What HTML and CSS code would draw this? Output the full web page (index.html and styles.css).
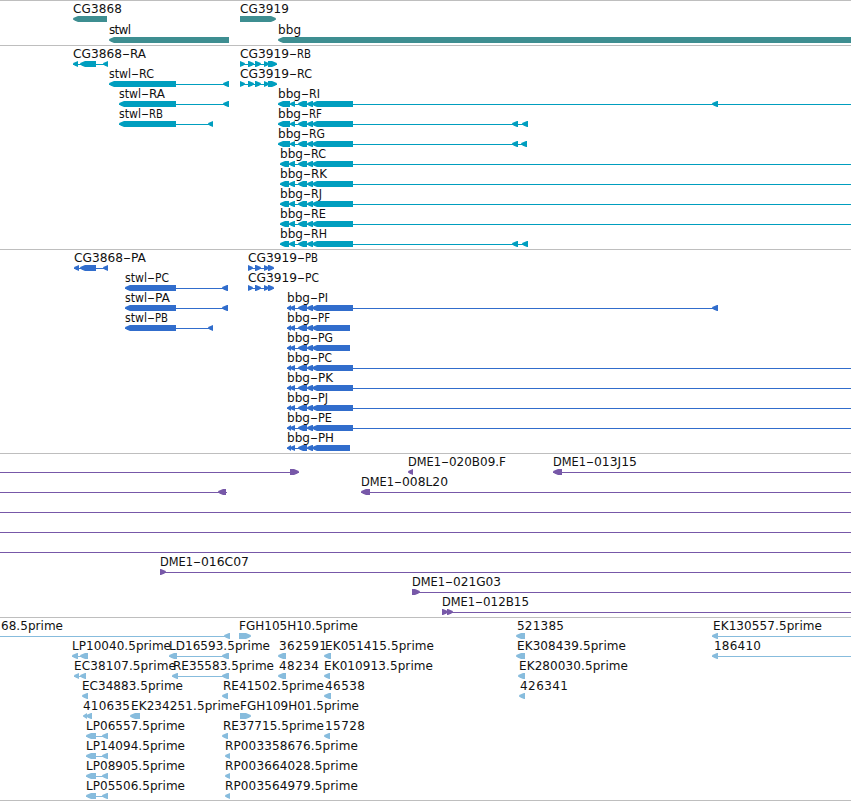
FILE: index.html
```
<!DOCTYPE html>
<html lang="en">
<head>
  <meta charset="UTF-8" />
  <title>Genome Browser</title>
  <link rel="stylesheet" href="styles.css">
</head>
<body>
  <div class="browser" id="browser"></div>
  <script src="tracks.js"></script>
</body>
</html>
```

FILE: styles.css
```
body {
  margin: 0;
  background: #fff;
}

.browser {
  width: 851px;
  height: 800px;
  overflow: hidden;
  border-bottom: 1px solid #bebebe;
}

.track {
  border-top: 1px solid #bebebe;
  overflow: hidden;
}

.track svg {
  display: block;
}

.label {
  font-family: "DejaVu Sans", sans-serif;
  font-size: 12px;
  fill: #111;
}

.genes {
  height: 44px;
  fill: #3e8e91;
}

.transcripts {
  height: 203px;
  fill: #009ebf;
}

.proteins {
  height: 203px;
  fill: #316dcc;
}

.bacs {
  height: 163px;
  fill: #7758a8;
}

.ests {
  height: 182px;
  fill: #87bcdd;
}
```

FILE: tracks.js
```
// feature: [label, x, label width, glyphs]
// glyphs: "<" left arrow, ">" right arrow, "-" line, each as start,end
const bbgR = "-278,353 <278,290 <290,295 <298,307 <307,313 <312,353";
const bbgR2 = "-280,353 <280,289 <289,295 <298,307 <307,313 <312,353";
const bbgP = "-287,350 <287,291 <290,295 <298,307 <307,313 <312,350";
const bbgP2 = "-287,353 <287,291 <290,295 <298,307 <307,313 <312,353";
const cgR = "-240,277 >240,245 >248,254 >255,261 >264,269 >268,277";
const cgP = "-248,274 >248,253 >255,261 >264,269 >268,274";
const lp = "-86,108 <86,96 <102,108";

const tracks = [
  { name: "genes", step: 21, rows: [
    [["CG3868", 73, 49, "<73,107"], ["CG3919", 240, 49, ">240,276"]],
    [["stwl", 109, 22, "<109,229"], ["bbg", 278, 23, "<278,860"]]
  ]},
  { name: "transcripts", step: 20, rows: [
    [["CG3868-RA", 73, 73, "-73,108 <73,78 <80,96 <103,108"], ["CG3919-RB", 240, 71, cgR]],
    [["stwl-RC", 109, 45, "-109,229 <109,176 <223,229"], ["CG3919-RC", 240, 72, cgR]],
    [["stwl-RA", 119, 46, "-119,229 <119,176 <223,229"], ["bbg-RI", 278, 42, bbgR + " -353,851 <712,718"]],
    [["stwl-RB", 119, 44, "-119,213 <119,176 <208,213"], ["bbg-RF", 278, 44, bbgR + " -353,528 <512,518 <522,528"]],
    [["bbg-RG", 278, 47, bbgR + " -353,527 <512,518 <521,527"]],
    [["bbg-RC", 280, 46, bbgR2 + " -353,851"]],
    [["bbg-RK", 280, 47, bbgR2 + " -353,851"]],
    [["bbg-RJ", 280, 42, bbgR2 + " -353,851"]],
    [["bbg-RE", 280, 46, bbgR2 + " -353,851"]],
    [["bbg-RH", 280, 47, bbgR2 + " -353,528 <512,518 <522,528"]]
  ]},
  { name: "proteins", step: 20, rows: [
    [["CG3868-PA", 74, 72, "-74,108 <74,79 <80,96 <103,108"], ["CG3919-PB", 248, 70, cgP]],
    [["stwl-PC", 125, 44, "-125,228 <125,176 <222,228"], ["CG3919-PC", 248, 71, cgP]],
    [["stwl-PA", 125, 45, "-125,228 <125,176 <222,228"], ["bbg-PI", 287, 41, bbgP2 + " -353,718 <712,718"]],
    [["stwl-PB", 125, 43, "-125,213 <125,176 <208,213"], ["bbg-PF", 287, 43, bbgP]],
    [["bbg-PG", 287, 46, bbgP]],
    [["bbg-PC", 287, 45, bbgP2 + " -353,851"]],
    [["bbg-PK", 287, 46, bbgP2 + " -353,851"]],
    [["bbg-PJ", 287, 41, bbgP2 + " -353,851"]],
    [["bbg-PE", 287, 45, bbgP2 + " -353,851"]],
    [["bbg-PH", 287, 47, bbgP]]
  ]},
  { name: "bacs", step: 20, rows: [
    [["", 0, 0, "-0,299 >290,299"], ["DME1-020B09.F", 408, 98, "<408,413"], ["DME1-013J15", 553, 84, "-553,851 <553,562"]],
    [["", 0, 0, "-0,227 <218,226"], ["DME1-008L20", 361, 87, "-361,851 <361,370"]],
    [["", 0, 0, "-0,851"]],
    [["", 0, 0, "-0,851"]],
    [["", 0, 0, "-0,851"]],
    [["DME1-016C07", 160, 89, "-160,851 >160,166"]],
    [["DME1-021G03", 412, 89, "-412,851 >412,420"]],
    [["DME1-012B15", 442, 87, "-442,851 >442,448 >447,453"]]
  ]},
  { name: "ests", step: 20, rows: [
    [["68.5prime", 1, 62, "-0,230 <224,230"], ["FGH105H10.5prime", 239, 119, ">239,251"],
     ["521385", 517, 47, "<516,525"], ["EK130557.5prime", 713, 109, "-712,851 <712,718"]],
    [["LP10040.5prime", 72, 99, "-72,88 <72,78 <80,88"], ["LD16593.5prime", 169, 101, "-169,229 <169,177 <222,229"],
     ["362591", 279, 48, "<278,286"], ["EK051415.5prime", 325, 109, "<324,331"],
     ["EK308439.5prime", 517, 109, "<516,525"], ["186410", 714, 47, "-712,851 <712,718"]],
    [["EC38107.5prime", 74, 102, "-74,86 <74,79 <80,86"], ["RE35583.5prime", 173, 101, "-172,229 <172,178 <222,229"],
     ["48234", 279, 40, "<278,286"], ["EK010913.5prime", 324, 109, "<324,330"],
     ["EK280030.5prime", 519, 109, "<518,525"]],
    [["EC34883.5prime", 82, 101, "<82,88"], ["RE41502.5prime", 223, 101, "<222,228"],
     ["46538", 325, 40, "<324,331"], ["426341", 520, 48, "<519,525"]],
    [["410635", 83, 47, "<83,87 <86,92"], ["EK234251.5prime", 131, 109, "<130,140"],
     ["FGH109H01.5prime", 240, 119, ">240,251"]],
    [["LP06557.5prime", 86, 99, lp], ["RE37715.5prime", 223, 101, "<222,228"], ["15728", 325, 40, "<324,330"]],
    [["LP14094.5prime", 86, 99, lp], ["RP003358676.5prime", 225, 133, "<225,230"]],
    [["LP08905.5prime", 86, 99, lp], ["RP003664028.5prime", 225, 133, "<225,230"]],
    [["LP05506.5prime", 86, 99, lp], ["RP003564979.5prime", 225, 133, "<225,230"]]
  ]}
];

// width of the part of a label before its dash
const prefixWidth = { CG3868: 49, CG3919: 49, stwl: 22, bbg: 23, DME1: 33 };
const dashWidth = 8;

function drawGlyph(glyph, y) {
  const type = glyph[0];
  const [a, b] = glyph.slice(1).split(",").map(Number);
  if (type === "-") {
    return `<rect x="${a}" y="${y + 3}" width="${b - a}" height="1"/>`;
  }
  const head = Math.min(5, b - a);
  // tip and base swap sides with the direction
  const d = type === "<" ? 1 : -1;
  const tip = type === "<" ? a : b;
  const base = type === "<" ? b : a;
  return `<polygon points="${tip},${y + 2.4} ${tip + 2 * d},${y + 1.2} ${tip + head * d},${y} ${base},${y} ` +
    `${base},${y + 6} ${tip + head * d},${y + 6} ${tip + 2 * d},${y + 4.8} ${tip},${y + 3.6}"/>`;
}

function span(text, x, width) {
  return `<tspan x="${x}" textLength="${width}" lengthAdjust="spacingAndGlyphs">${text}</tspan>`;
}

function drawLabel(label, x, y, width) {
  const [prefix, suffix] = label.split("-");
  if (!suffix) {
    return `<text class="label" x="${x}" y="${y}" textLength="${width}">${label}</text>`;
  }
  const w = prefixWidth[prefix];
  const end = w + dashWidth;
  return `<text class="label" y="${y}">` + span(prefix, x, w) + span("-", x + w, dashWidth) +
    span(suffix, x + end, width - end) + `</text>`;
}

const browser = document.getElementById("browser");

tracks.forEach(track => {
  let svg = "";
  track.rows.forEach((row, i) => {
    const top = i * track.step;
    row.forEach(([label, x, width, glyphs]) => {
      glyphs.split(" ").forEach(g => {
        svg += drawGlyph(g, top + 15);
      });
      if (label) {
        svg += drawLabel(label, x, top + 12, width);
      }
    });
  });
  const div = document.createElement("div");
  div.className = "track " + track.name;
  div.innerHTML = `<svg width="851" height="${track.rows.length * track.step + 4}">${svg}</svg>`;
  browser.appendChild(div);
});
```
